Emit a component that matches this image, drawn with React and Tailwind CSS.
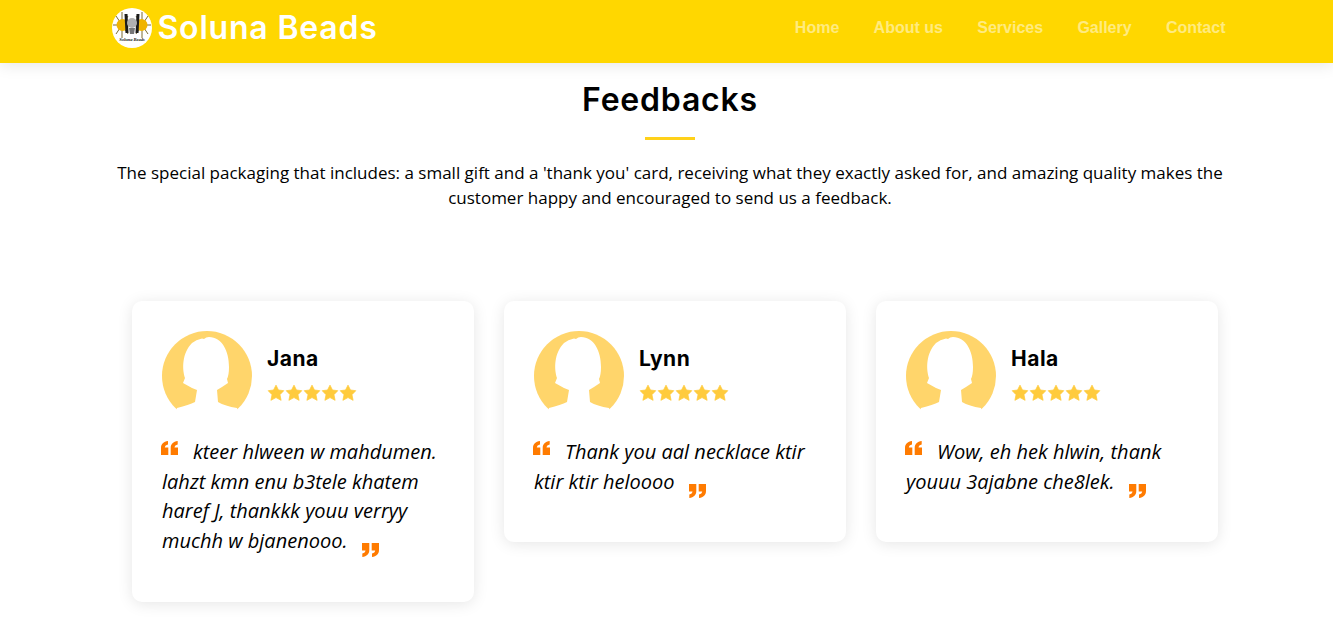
const LINKS = ['Home', 'About us', 'Services', 'Gallery', 'Contact'];

const FEEDBACKS = [
  { name: 'Jana', text: 'kteer hlween w mahdumen. lahzt kmn enu b3tele khatem haref J, thankkk youu verryy muchh w bjanenooo.' },
  { name: 'Lynn', text: 'Thank you aal necklace ktir ktir ktir heloooo' },
  { name: 'Hala', text: 'Wow, eh hek hlwin, thank youuu 3ajabne che8lek.' },
];

const Logo = () => (
  <svg width="40" height="40" viewBox="0 0 40 40" className="shrink-0">
    <circle cx="20" cy="20" r="20" fill="#fff" />
    <path d="M10 4v26M1 17h18M4 8l12 18M16 8L4 26M30 4v26M21 17h18M24 8l12 18M36 8L24 26" stroke="#6b5a1c" strokeWidth="0.9" />
    <circle cx="10.500" cy="17" r="6" fill="#f0b400" />
    <circle cx="29.500" cy="17" r="6" fill="#f0b400" />
    <path d="M12.500 6h3l1 19h-3zM24.500 6h3l-1 19h-3z" fill="#1c1c1c" />
    <circle cx="20" cy="15" r="5" fill="#b0b0b0" />
    <path d="M17 20h6l-1 6h-4z" fill="#777" />
    <text x="20" y="33" textAnchor="middle" fontSize="4.500" fontWeight="700" fontStyle="italic" fill="#111" fontFamily="Liberation Serif, serif">Soluna Beads</text>
  </svg>
);

const Avatar = () => (
  <svg width="90" height="90" viewBox="0 0 90 90" className="shrink-0">
    <circle cx="45" cy="45" r="45" fill="#ffd56b" />
    <path
      d="M15 77 Q27 74 33 71 L35 59 L30 57 L21 52 L23 47 C20 38 20 22 30 12 Q34 8.500 40 7.500 L42 8 Q44 6 47 6 C60 6 67 20 67 36 Q67 44 65 48 L66 52 L60 56 L55 59 L56 71 Q63 75 75 77 L78 90 L12 90 Z"
      fill="#fff"
    />
  </svg>
);

const Star = () => (
  <svg width="18" height="18" viewBox="0 0 24 24" fill="currentColor" stroke="currentColor" strokeWidth="1" strokeLinejoin="round">
    <path d="M12 1.500L15.300 8l7.100 .9-5.100 5.300 1.500 7.600L12 18.100l-6.800 3.700 1.500-7.600L1.600 8.900 8.700 8z" />
  </svg>
);

const QuoteMarks = ({ className }) => (
  <svg width="17" height="14" viewBox="0 0 17 14" fill="currentColor" className={className}>
    <path d="M0 14V7C0 3 2.500.5 7 0v3.500C5 3.800 4 5 3.800 6.500h3.500V14zM9.700 14V7c0-4 2.500-6.500 7-7v3.500c-2 .3-3 1.500-3.200 3H17V14z" />
  </svg>
);

const Card = ({ name, text }) => (
  <div className="bg-white rounded-[10px] px-[30px] pt-[30px] pb-[46px] shadow-[0_2px_15px_rgba(0,0,0,0.1)]">
    <div className="flex items-start h-[90px]">
      <Avatar />
      <div className="ml-[15px] pt-[11px]">
        <h3 className="text-[21px] leading-[34px] font-bold tracking-[0.5px] text-black font-['Inter','Liberation_Sans',sans-serif]">{name}</h3>
        <div className="flex mt-[8px] text-[#ffcb3d]">
          {[0, 1, 2, 3, 4].map((i) => (
            <Star key={i} />
          ))}
        </div>
      </div>
    </div>
    <p className="mt-[16px] text-[20px] leading-[29.700px] italic text-black">
      <QuoteMarks className="inline-block align-baseline text-[#ff7b00] -ml-[1px] mr-[15px] -translate-y-[4px]" />
      {text}
      <QuoteMarks className="inline-block align-baseline text-[#ff7b00] ml-[14.500px] rotate-180 translate-y-[9px]" />
    </p>
  </div>
);

export default function App() {
  return (
    <div className="min-h-[623px] bg-white font-['Open_Sans',sans-serif] overflow-hidden">
      <header className="h-[63px] bg-[#ffd700] shadow-[0_2px_15px_rgba(0,0,0,0.1)] relative">
        <div className="max-w-[1140px] mx-auto px-[15px] flex items-start justify-between">
          <div className="flex items-center pt-[8px]">
            <Logo />
            <span className="ml-[6px] text-[32px] leading-[40px] font-semibold tracking-[0.8px] text-white font-['Inter','Liberation_Sans',sans-serif]">Soluna Beads</span>
          </div>
          <nav className="flex gap-[34.300px] pt-[19px] -mr-[4px] font-['Liberation_Sans',sans-serif] font-bold text-[16px] leading-[18px] text-white/50">
            {LINKS.map((l) => (
              <a key={l}>{l}</a>
            ))}
          </nav>
        </div>
      </header>

      <section className="ml-[112px] w-[1116px]">
        <h2 className="mt-[16px] text-center text-[32px] leading-[42px] font-semibold tracking-[0.8px] text-black font-['Inter','Liberation_Sans',sans-serif]">Feedbacks</h2>
        <div className="w-[50px] h-[3px] bg-[#ffd11a] mx-auto mt-[16px]" />
        <p className="mt-[20px] text-center text-[17px] leading-[25px] text-black">
          The special packaging that includes: a small gift and a 'thank you' card, receiving what they exactly asked for, and amazing quality makes the customer happy and encouraged to send us a feedback.
        </p>
        <div className="grid grid-cols-3 gap-[30px] items-start mt-[91px] pl-[20px] pr-[10px]">
          {FEEDBACKS.map((f) => (
            <Card key={f.name} {...f} />
          ))}
        </div>
      </section>
    </div>
  );
}
